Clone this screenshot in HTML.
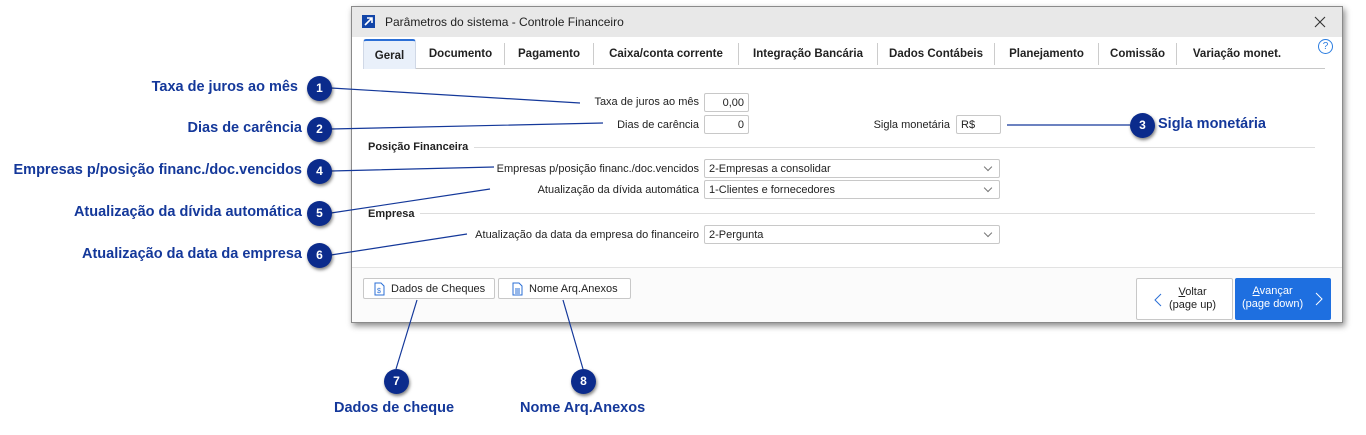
<!DOCTYPE html>
<html><head><meta charset="utf-8"><style>
*{box-sizing:border-box;margin:0;padding:0}
body{width:1366px;height:435px;background:#fff;position:relative;overflow:hidden;font-family:"Liberation Sans",sans-serif;font-size:11px;color:#222}
.abs{position:absolute}
.dlg{left:351px;top:6px;width:992px;height:317px;background:#fff;border:1px solid #8a8a8a;box-shadow:2px 3px 6px rgba(0,0,0,.45)}
.title{left:0;top:0;width:990px;height:30px;background:#e8e8e8}
.tab{top:32px;height:30px;font-weight:bold;font-size:11.5px;line-height:30px;text-align:center;color:#222}
.sep{top:36px;width:1px;height:22px;background:#ccc}
.lbl{font-size:11px;text-align:right;white-space:nowrap}
.inp{height:19px;border:1px solid #c8c8c8;background:#fff;font-size:11px;line-height:18px;padding:0 4px;border-radius:2px}
.cb::after{content:"";position:absolute;right:8px;top:4px;width:5px;height:5px;border-right:1px solid #777;border-bottom:1px solid #777;transform:rotate(45deg)}
.sec{font-weight:bold;font-size:11px}
.btn{border:1px solid #c8c8c8;border-radius:2px;background:#fff;font-size:11px}
.c{position:absolute;width:25px;height:25px;border-radius:50%;background:#0b2b8c;color:#fff;font-weight:bold;font-size:12px;text-align:center;line-height:25px;box-shadow:1px 2px 3px rgba(0,0,0,.5)}
.cl{position:absolute;font-weight:bold;font-size:14.5px;color:#14389a;white-space:nowrap}
</style></head><body>
<div class="abs dlg">
 <div class="abs title">
  <div class="abs" style="left:10px;top:8px;width:13px;height:13px;background:#1245a8"></div>
  <svg class="abs" style="left:10px;top:8px" width="13" height="13"><path d="M3 10L10 3M5 3h5v5" stroke="#fff" stroke-width="1.6" fill="none"/></svg>
  <div class="abs" style="left:33px;top:8px;font-size:12px">Parâmetros do sistema - Controle Financeiro</div>
  <svg class="abs" style="left:962px;top:9px" width="12" height="12"><path d="M1 1L11 11M11 1L1 11" stroke="#333" stroke-width="1.1"/></svg>
 </div>
 <div class="abs" style="left:11px;top:61px;width:962px;height:1px;background:#c8c8c8"></div>
 <div class="abs tab" style="left:11px;width:53px;background:#e9f0fa;border-top:2px solid #2b6fd6;border-radius:3px 3px 0 0;border-left:1px solid #d0d8e6;border-right:1px solid #d0d8e6">Geral</div>
 <div class="abs tab" style="left:65px;width:87px">Documento</div><div class="abs sep" style="left:152px"></div>
 <div class="abs tab" style="left:153px;width:88px">Pagamento</div><div class="abs sep" style="left:241px"></div>
 <div class="abs tab" style="left:242px;width:144px">Caixa/conta corrente</div><div class="abs sep" style="left:386px"></div>
 <div class="abs tab" style="left:387px;width:138px">Integração Bancária</div><div class="abs sep" style="left:525px"></div>
 <div class="abs tab" style="left:526px;width:116px">Dados Contábeis</div><div class="abs sep" style="left:642px"></div>
 <div class="abs tab" style="left:643px;width:103px">Planejamento</div><div class="abs sep" style="left:746px"></div>
 <div class="abs tab" style="left:747px;width:77px">Comissão</div><div class="abs sep" style="left:824px"></div>
 <div class="abs tab" style="left:825px;width:120px">Variação monet.</div>
 <div class="abs" style="left:966px;top:32px;width:15px;height:15px;border:1.3px solid #2b7de0;border-radius:50%;color:#2b7de0;font-size:10px;text-align:center;line-height:13px">?</div>

 <div class="abs lbl" style="right:643px;top:89px">Taxa de juros ao mês</div>
 <div class="abs inp" style="left:352px;top:86px;width:45px;text-align:right">0,00</div>
 <div class="abs lbl" style="right:643px;top:112px">Dias de carência</div>
 <div class="abs inp" style="left:352px;top:108px;width:45px;text-align:right">0</div>
 <div class="abs lbl" style="right:392px;top:112px">Sigla monetária</div>
 <div class="abs inp" style="left:604px;top:108px;width:45px">R$</div>

 <div class="abs sec" style="left:16px;top:134px">Posição Financeira</div>
 <div class="abs" style="left:122px;top:140px;width:841px;height:1px;background:#ddd"></div>
 <div class="abs lbl" style="right:643px;top:156px">Empresas p/posição financ./doc.vencidos</div>
 <div class="abs inp cb" style="left:352px;top:152px;width:296px">2-Empresas a consolidar</div>
 <div class="abs lbl" style="right:643px;top:177px">Atualização da dívida automática</div>
 <div class="abs inp cb" style="left:352px;top:173px;width:296px">1-Clientes e fornecedores</div>
 <div class="abs sec" style="left:16px;top:201px">Empresa</div>
 <div class="abs" style="left:68px;top:206px;width:895px;height:1px;background:#ddd"></div>
 <div class="abs lbl" style="right:643px;top:222px">Atualização da data da empresa do financeiro</div>
 <div class="abs inp cb" style="left:352px;top:218px;width:296px">2-Pergunta</div>

 <div class="abs" style="left:0;top:260px;width:990px;height:55px;background:#fbfbfb;border-top:1px solid #e2e2e2"></div>
 <div class="abs btn" style="left:11px;top:271px;width:132px;height:21px">
  <svg class="abs" style="left:10px;top:3px" width="11" height="14"><path d="M1 1h6l3 3v9H1z" stroke="#2b6fd6" fill="none"/><text x="3" y="11" font-size="7" fill="#2b6fd6" font-family="Liberation Sans">$</text></svg>
  <span class="abs" style="left:27px;top:4px">Dados de Cheques</span></div>
 <div class="abs btn" style="left:146px;top:271px;width:133px;height:21px">
  <svg class="abs" style="left:13px;top:3px" width="11" height="14"><path d="M1 1h6l3 3v9H1zM3 7h5M3 9h5M3 11h5" stroke="#2b6fd6" fill="none"/></svg>
  <span class="abs" style="left:30px;top:4px">Nome Arq.Anexos</span></div>
 <div class="abs btn" style="left:784px;top:271px;width:97px;height:42px">
  <svg class="abs" style="left:17px;top:14px" width="8" height="14"><path d="M7 1L1 7l6 6" stroke="#2b6fd6" fill="none"/></svg>
  <div class="abs" style="left:32px;top:7px;text-align:center;line-height:13px"><u>V</u>oltar<br>(page up)</div></div>
 <div class="abs" style="left:883px;top:271px;width:96px;height:42px;background:#1e6fe0;color:#fff;border-radius:2px">
  <div class="abs" style="left:7px;top:7px;text-align:center;line-height:13px"><u>A</u>vançar<br>(page down)</div>
  <svg class="abs" style="left:80px;top:14px" width="8" height="14"><path d="M1 1l6 6-6 6" stroke="#fff" fill="none"/></svg></div>
</div>

<svg class="abs" style="left:0;top:0" width="1366" height="435"><g stroke="#14389a" stroke-width="1.2" fill="none">
<path d="M331 88L580 103M331 129L603 123M331 171L494 167M331 213L490 189M331 255L467 234M1007 125L1130 125M396 369L417 300M583 369L563 300"/></g></svg>
<div class="c" style="left:307px;top:76px">1</div>
<div class="c" style="left:307px;top:117px">2</div>
<div class="c" style="left:307px;top:159px">4</div>
<div class="c" style="left:307px;top:201px">5</div>
<div class="c" style="left:307px;top:243px">6</div>
<div class="c" style="left:1130px;top:113px">3</div>
<div class="c" style="left:384px;top:369px">7</div>
<div class="c" style="left:571px;top:369px">8</div>
<div class="cl" style="right:1068px;top:79px">Taxa de juros ao mês</div>
<div class="cl" style="right:1064px;top:120px">Dias de carência</div>
<div class="cl" style="right:1064px;top:162px">Empresas p/posição financ./doc.vencidos</div>
<div class="cl" style="right:1064px;top:204px">Atualização da dívida automática</div>
<div class="cl" style="right:1064px;top:246px">Atualização da data da empresa</div>
<div class="cl" style="left:1158px;top:116px">Sigla monetária</div>
<div class="cl" style="left:334px;top:400px">Dados de cheque</div>
<div class="cl" style="left:520px;top:400px">Nome Arq.Anexos</div>
</body></html>
